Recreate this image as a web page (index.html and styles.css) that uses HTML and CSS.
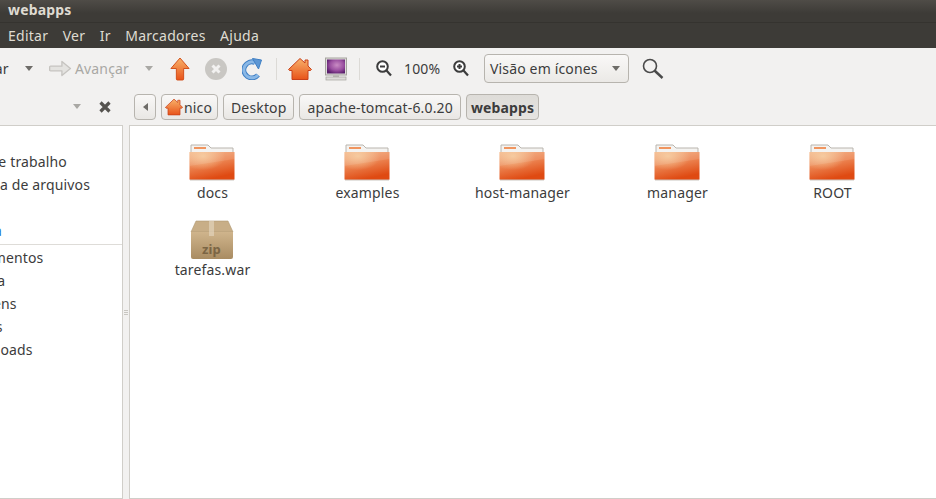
FILE: index.html

```html
<!DOCTYPE html>
<html lang="pt-BR">
<head>
  <meta charset="UTF-8">
  <title>webapps</title>
  <link rel="stylesheet" href="styles.css">
</head>
<body>

<!-- shared icons -->
<svg class="defs" width="0" height="0">
  <defs>
    <linearGradient id="gfolder" x1="0" y1="0" x2="0.35" y2="1">
      <stop offset="0" stop-color="#f3b184"/>
      <stop offset="0.5" stop-color="#ec8350"/>
      <stop offset="1" stop-color="#df4a12"/>
    </linearGradient>
    <radialGradient id="gglow" cx="0.3" cy="0.15" r="0.5">
      <stop offset="0" stop-color="#f6cf9f" stop-opacity="0.8"/>
      <stop offset="1" stop-color="#f6cf9f" stop-opacity="0"/>
    </radialGradient>
    <linearGradient id="gorange" x1="0" y1="0" x2="0" y2="1">
      <stop offset="0" stop-color="#f8b26a"/>
      <stop offset="1" stop-color="#e8531a"/>
    </linearGradient>
    <linearGradient id="gbox" x1="0" y1="0" x2="0" y2="1">
      <stop offset="0" stop-color="#cfb48c"/>
      <stop offset="1" stop-color="#a98c62"/>
    </linearGradient>
    <radialGradient id="gscreen" cx="0.55" cy="0.4" r="0.65">
      <stop offset="0" stop-color="#c98cc4"/>
      <stop offset="0.6" stop-color="#9a4fa0"/>
      <stop offset="1" stop-color="#5a1f6c"/>
    </radialGradient>
    <symbol id="folder" viewBox="0 0 48 38">
      <path d="M3 2h17l3 3h22v10H3z" fill="#f4f3f1" stroke="#b9b5ae"/>
      <rect x="6" y="4" width="12" height="2" fill="#f0955f"/>
      <path d="M1.500 9h45v27a1 1 0 0 1-1 1h-43a1 1 0 0 1-1-1z" fill="url(#gfolder)"/>
      <path d="M1.500 9h45v27a1 1 0 0 1-1 1h-43a1 1 0 0 1-1-1z" fill="url(#gglow)"/>
      <path d="M1.500 9h45v7L1.500 23z" fill="#fff" opacity="0.1"/>
      <path d="M2 37h44" stroke="#c9c5bf"/>
    </symbol>
    <symbol id="house" viewBox="0 0 24 24">
      <path d="M12 1.500 17 6V3h3v6l3.500 3.500-1 1H20v9H4v-9H1.500l-1-1z" fill="url(#gorange)" stroke="#c8401a"/>
    </symbol>
  </defs>
</svg>

<header class="titlebar">webapps</header>

<nav class="menubar">
  <span>Editar</span>
  <span>Ver</span>
  <span>Ir</span>
  <span>Marcadores</span>
  <span>Ajuda</span>
</nav>

<div class="toolbar">
  <span class="tool-label back-label">Voltar</span>
  <i class="caret caret-back"></i>
  <svg class="ic-forward" width="23" height="17" viewBox="0 0 24 18">
    <path d="M1.500 6.500h12V1.500l9 7.500-9 7.500v-5h-12a1 1 0 0 1-1-1v-3a1 1 0 0 1 1-1z" fill="#e4e3e0" stroke="#c6c4c0" stroke-width="1.400" stroke-linejoin="round"/>
  </svg>
  <span class="tool-label dim">Avançar</span>
  <i class="caret caret-dim"></i>
  <svg class="ic-up" width="20" height="24" viewBox="0 0 22 24" preserveAspectRatio="none">
    <path d="M11 1 21 11.500h-6V22a1 1 0 0 1-1 1H8a1 1 0 0 1-1-1V11.500H1z" fill="url(#gorange)" stroke="#d24d17" stroke-linejoin="round"/>
  </svg>
  <svg class="ic-stop" width="22" height="22" viewBox="0 0 22 22">
    <circle cx="11" cy="11" r="11" fill="#c9c7c3"/>
    <path d="M7.500 7.500l7 7m0-7-7 7" stroke="#f2f1f0" stroke-width="3"/>
  </svg>
  <svg class="ic-reload" width="20" height="22" viewBox="0 0 20 22">
    <path d="M16 17a8 8 0 1 1-3-12.500" fill="none" stroke="#3f7fc4" stroke-width="5"/>
    <path d="M16 17a8 8 0 1 1-3-12.500" fill="none" stroke="#8ab8e6" stroke-width="3"/>
    <path d="M10.500 0.500 19.500 2l-3 9z" fill="#5d97d4" stroke="#3f7fc4" stroke-linejoin="round"/>
  </svg>
  <i class="tool-sep sep-a"></i>
  <svg class="ic-home" width="24" height="24"><use href="#house"/></svg>
  <svg class="ic-computer" width="22" height="24" viewBox="0 0 22 24">
    <rect x="0.500" y="1" width="21" height="17" fill="#dddcd9" stroke="#a5a39e"/>
    <rect x="2" y="2.500" width="18" height="14" fill="url(#gscreen)"/>
    <path d="M8 18h6v2H8z" fill="#bdbbb6"/>
    <rect x="1" y="20" width="20" height="3" fill="#dddcd9" stroke="#a5a39e" stroke-width="0.700"/>
  </svg>
  <i class="tool-sep sep-b"></i>
  <svg class="ic-zoom-out" width="16" height="17" viewBox="0 0 16 17">
    <circle cx="6.500" cy="6.500" r="5.300" fill="#fff" stroke="#3c3c3c" stroke-width="2"/>
    <path d="M4 6.500h5" stroke="#3c3c3c" stroke-width="2"/>
    <path d="M10.500 10.500l4.500 5" stroke="#3c3c3c" stroke-width="2.200"/>
  </svg>
  <span class="tool-label zoom-val">100%</span>
  <svg class="ic-zoom-in" width="16" height="17" viewBox="0 0 16 17">
    <circle cx="6.500" cy="6.500" r="5.300" fill="#fff" stroke="#3c3c3c" stroke-width="2"/>
    <path d="M4 6.500h5M6.500 4v5" stroke="#3c3c3c" stroke-width="2"/>
    <path d="M10.500 10.500l4.500 5" stroke="#3c3c3c" stroke-width="2.200"/>
  </svg>
  <div class="combo">Visão em ícones<i class="caret"></i></div>
  <svg class="ic-search" width="22" height="22" viewBox="0 0 22 22">
    <circle cx="8" cy="8" r="6.500" fill="none" stroke="#4a4a4a" stroke-width="1.600"/>
    <path d="M12.500 12.500l8 7.500" stroke="#4a4a4a" stroke-width="2.400"/>
  </svg>
</div>

<div class="pathrow">
  <div class="places-head">
    <i class="caret caret-dim"></i>
    <svg class="ic-close" width="12" height="12" viewBox="0 0 12 12">
      <path d="M1.500 1.500l9 9m0-9-9 9" stroke="#55534f" stroke-width="3.200"/>
    </svg>
  </div>
  <div class="crumbs">
    <span class="crumb crumb-back"><i class="tri-left"></i></span>
    <span class="crumb crumb-home"><svg width="18" height="18"><use href="#house"/></svg>nico</span>
    <span class="crumb">Desktop</span>
    <span class="crumb">apache-tomcat-6.0.20</span>
    <span class="crumb crumb-on">webapps</span>
  </div>
</div>

<div class="panes">
  <aside class="sidebar">
    <ul class="places">
      <li>Área de trabalho</li>
      <li>Sistema de arquivos</li>
      <li>Rede</li>
      <li class="is-link">Lixeira</li>
    </ul>
    <ul class="places places-2">
      <li>Documentos</li>
      <li>Música</li>
      <li>Imagens</li>
      <li>Vídeos</li>
      <li>Downloads</li>
    </ul>
  </aside>
  <div class="handle"><i></i><i></i><i></i></div>
  <main class="files">
    <div class="file"><svg class="folder" width="48" height="38"><use href="#folder"/></svg><span>docs</span></div>
    <div class="file"><svg class="folder" width="48" height="38"><use href="#folder"/></svg><span>examples</span></div>
    <div class="file"><svg class="folder" width="48" height="38"><use href="#folder"/></svg><span>host-manager</span></div>
    <div class="file"><svg class="folder" width="48" height="38"><use href="#folder"/></svg><span>manager</span></div>
    <div class="file"><svg class="folder" width="48" height="38"><use href="#folder"/></svg><span>ROOT</span></div>
    <div class="file">
      <div class="zip">
        <svg width="44" height="40" viewBox="0 0 44 40">
          <path d="M6 1h32l5 11H1z" fill="#c8ae87" stroke="#b09872" stroke-width="0.600"/>
          <path d="M1 12h42v25a2 2 0 0 1-2 2H3a2 2 0 0 1-2-2z" fill="url(#gbox)"/>
          <path d="M19 1h5v15h-5z" fill="#e4d6bf" opacity="0.65"/>
        </svg>
        <em>zip</em>
      </div>
      <span>tarefas.war</span>
    </div>
  </main>
</div>

</body>
</html>
```

FILE: styles.css

```css
* {
  box-sizing: border-box;
}

html, body {
  height: 100%;
}

body {
  margin: 0;
  width: 936px;
  height: 499px;
  overflow: hidden;
  display: flex;
  flex-direction: column;
  background: #f2f1f0;
  color: #3c3c3c;
  font-family: "Noto Sans", "Open Sans", sans-serif;
  font-size: 14px;
  letter-spacing: 0.15px;
}

.defs {
  position: absolute;
}

i {
  display: block;
  flex: none;
}

svg {
  display: block;
  flex: none;
}

/* window chrome */
.titlebar {
  height: 23px;
  padding-left: 8px;
  line-height: 19px;
  font-weight: bold;
  font-size: 14px;
  color: #dfdbd2;
  background: linear-gradient(#4f4c47, #3d3b37 60%);
  border-bottom: 1px solid #35332f;
}

.menubar {
  height: 25px;
  display: flex;
  padding-left: 8px;
  gap: 14.500px;
  line-height: 26px;
  letter-spacing: 0.25px;
  color: #dfdbd2;
  background: #3d3b37;
}

/* toolbar */
.toolbar {
  height: 44px;
  display: flex;
  align-items: center;
  overflow: hidden;
  padding-bottom: 3px;
}

.tool-label {
  flex: none;
  white-space: nowrap;
}

.back-label {
  margin-left: -31px;
  width: 40px;
}

.dim {
  color: #a9a8a4;
  margin-left: 3px;
  width: 53px;
}

.caret {
  width: 0;
  height: 0;
  border-left: 4px solid transparent;
  border-right: 4px solid transparent;
  border-top: 5px solid #6e6c68;
}

.caret-dim {
  border-top-color: #a9a8a4;
}

.caret-back {
  margin-left: 16px;
}

.ic-forward {
  margin-left: 16px;
}

.toolbar .caret-dim {
  margin-left: 17px;
}

.ic-up {
  margin-left: 17px;
}

.ic-stop {
  margin-left: 15px;
}

.ic-reload {
  margin-left: 15px;
}

.tool-sep {
  width: 1px;
  height: 22px;
  background: #dcdad6;
}

.sep-a {
  margin-left: 14px;
}

.ic-home {
  margin-left: 11px;
}

.ic-computer {
  margin-left: 13px;
}

.sep-b {
  margin-left: 12px;
}

.ic-zoom-out {
  margin-left: 16px;
}

.zoom-val {
  margin-left: 12px;
  width: 37px;
}

.ic-zoom-in {
  margin-left: 12px;
}

.combo {
  margin-left: 15px;
  flex: none;
  width: 145px;
  height: 29px;
  padding: 0 8px 0 5px;
  display: flex;
  align-items: center;
  justify-content: space-between;
  border: 1px solid #b7b4ae;
  border-radius: 4px;
  background: linear-gradient(#f9f8f7, #ebe9e6);
}

.ic-search {
  margin-left: 13px;
}

/* path bar */
.pathrow {
  height: 33px;
  display: flex;
  align-items: flex-start;
}

.places-head {
  width: 134px;
  flex: none;
  height: 29px;
  display: flex;
  align-items: center;
  padding-left: 73px;
  gap: 18px;
}

.crumbs {
  display: flex;
  gap: 5px;
  height: 26px;
  margin-top: 2px;
}

.crumb {
  height: 26px;
  padding: 0 7px;
  display: flex;
  align-items: center;
  border: 1px solid #b7b4ae;
  border-radius: 4px;
  background: linear-gradient(#f9f8f7, #e9e7e4);
  white-space: nowrap;
}

.crumb-back {
  width: 22px;
  padding: 0 0 0 8px;
}

.tri-left {
  width: 0;
  height: 0;
  border-top: 4px solid transparent;
  border-bottom: 4px solid transparent;
  border-right: 5px solid #6e6c68;
}

.crumb-home {
  width: 57px;
  padding: 0 0 0 3px;
  gap: 1px;
}

.crumb-on {
  padding: 0 4px;
  font-weight: bold;
  background: linear-gradient(#dedcd8, #e6e4e1);
}

/* panes */
.panes {
  flex: 1;
  display: flex;
  min-height: 0;
}

.sidebar {
  width: 123px;
  flex: none;
  background: #fff;
  border: 1px solid #d0cec9;
  border-left: 0;
  overflow: hidden;
}

.places {
  list-style: none;
  margin: 0 0 0 -45px;
  padding: 24px 0 0;
  white-space: nowrap;
  width: 175px;
}

.places li {
  height: 23px;
  line-height: 23px;
}

.places .is-link {
  color: #2a76c6;
  margin-left: 3px;
}

.places-2 {
  margin-left: -42px;
  margin-top: 2px;
  padding-top: 1px;
  border-top: 1px solid #dedcd8;
}

.handle {
  width: 6px;
  flex: none;
  display: flex;
  flex-direction: column;
  justify-content: center;
  gap: 1px;
  padding: 0 1px;
}

.handle i {
  height: 1px;
  background: #c8c6c1;
}

.files {
  flex: 1;
  background: #fff;
  border: 1px solid #d0cec9;
  border-right: 0;
  display: grid;
  grid-template-columns: repeat(5, 155px);
  grid-auto-rows: 77px;
  padding: 17px 0 0 5px;
  align-content: start;
}

.file {
  display: flex;
  flex-direction: column;
  align-items: center;
}

.file span {
  margin-top: 3px;
  line-height: 18px;
  white-space: nowrap;
}

.folder {
  margin-left: -2px;
}

.zip {
  position: relative;
  width: 44px;
  height: 38px;
  margin-left: -2px;
}

.zip em {
  position: absolute;
  left: 0;
  right: 0;
  top: 20px;
  text-align: center;
  font-style: normal;
  font-size: 13px;
  font-weight: bold;
  color: #7b6544;
}
```
